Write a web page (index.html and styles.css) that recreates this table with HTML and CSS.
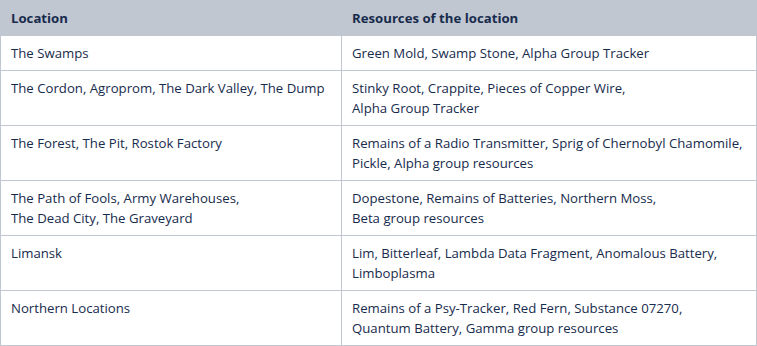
FILE: index.html
```html
<!DOCTYPE html>
<html>
<head>
<meta charset="utf-8">
<link rel="stylesheet" href="styles.css">
</head>
<body>
<table class="res-table">
  <colgroup><col class="col-loc"><col class="col-res"></colgroup>
  <thead>
    <tr><th>Location</th><th>Resources of the location</th></tr>
  </thead>
  <tbody>
    <tr><td>The Swamps</td><td>Green Mold, Swamp Stone, Alpha Group Tracker</td></tr>
    <tr><td>The Cordon, Agroprom, The Dark Valley, The Dump</td><td>Stinky Root, Crappite, Pieces of Copper Wire,<br>Alpha Group Tracker</td></tr>
    <tr><td>The Forest, The Pit, Rostok Factory</td><td>Remains of a Radio Transmitter, Sprig of Chernobyl Chamomile,<br>Pickle, Alpha group resources</td></tr>
    <tr><td>The Path of Fools, Army Warehouses,<br>The Dead City, The Graveyard</td><td>Dopestone, Remains of Batteries, Northern Moss,<br>Beta group resources</td></tr>
    <tr><td>Limansk</td><td>Lim, Bitterleaf, Lambda Data Fragment, Anomalous Battery,<br>Limboplasma</td></tr>
    <tr><td>Northern Locations</td><td>Remains of a Psy-Tracker, Red Fern, Substance 07270,<br>Quantum Battery, Gamma group resources</td></tr>
  </tbody>
</table>
</body>
</html>
```

FILE: styles.css
```css
html, body {
  margin: 0;
  padding: 0;
  background: #ffffff;
}
.res-table {
  width: 757px;
  border-collapse: collapse;
  table-layout: fixed;
  font-family: "Open Sans", "Noto Sans", sans-serif;
  font-size: 13.2px;
  line-height: 20px;
  color: #172b4d;
}
.col-loc { width: 341px; }
.res-table th,
.res-table td {
  border: 1px solid #c1c7d0;
  padding: 7px 10px;
  text-align: left;
  vertical-align: top;
}
.res-table th {
  background: #c1c7d0;
  font-weight: 700;
}
```
